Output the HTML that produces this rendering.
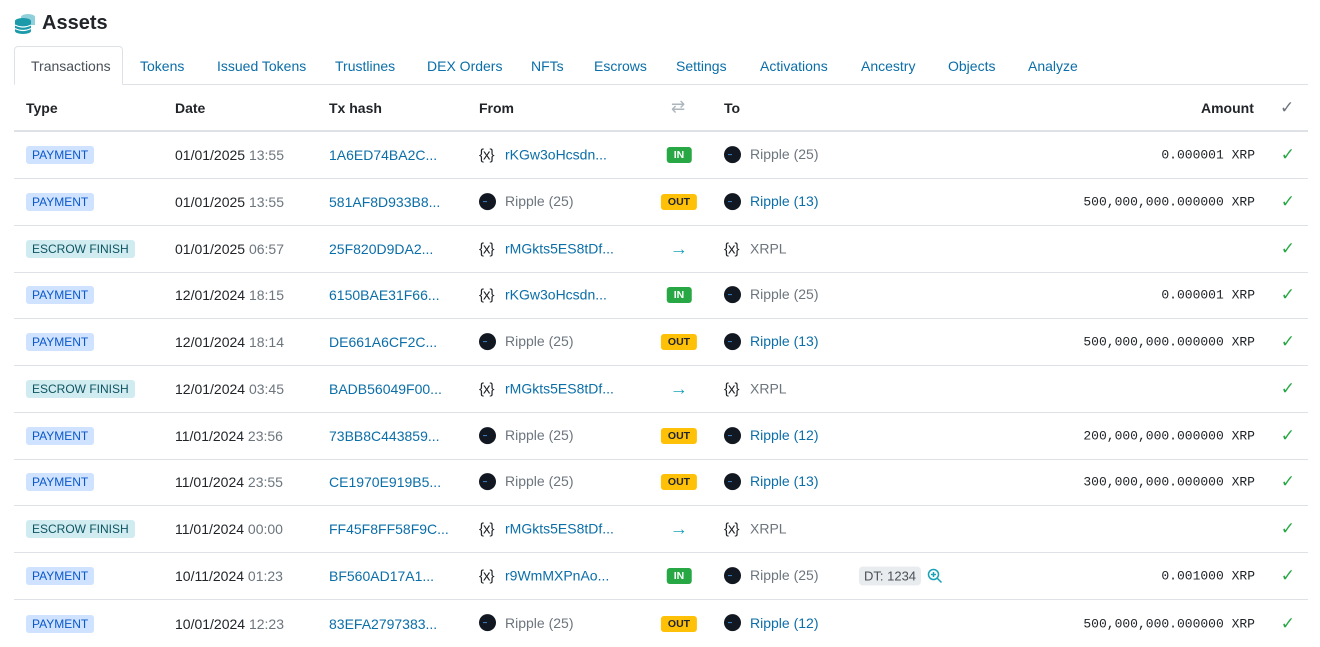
<!DOCTYPE html>
<html><head><meta charset="utf-8"><style>
*{box-sizing:border-box;margin:0;padding:0}
body{width:1320px;height:645px;background:#fff;font-family:"Liberation Sans",sans-serif;font-size:14px;color:#212529;position:relative;overflow:hidden}
.a{position:absolute;white-space:nowrap}
.title{left:42px;top:12px;font-size:20px;font-weight:bold;color:#212529}
.tabs{position:absolute;left:14px;top:84px;width:1294px;border-top:1px solid #dee2e6}
.tab{position:absolute;top:58px;color:#0a6ea8;font-size:14px}
.act{position:absolute;left:14px;top:46px;width:109px;height:39px;border:1px solid #dee2e6;border-bottom:1px solid #fff;border-radius:4px 4px 0 0;background:#fff}
.hd{font-weight:bold;top:100px}
.hline{position:absolute;left:14px;top:130px;width:1294px;height:2px;background:#dee2e6}
.row{position:absolute;left:14px;width:1294px;height:47px;border-bottom:1px solid #dee2e6}
.row .a{top:50%;transform:translateY(-50%)}
.badge{left:12px;background:#cfe2ff;color:#0a58ca;font-size:12px;padding:2px 6px;border-radius:3px}
.badge.e{background:#d1ecf1;color:#0c5460}
.dt{left:161px}.dt span{color:#6c757d}
.hash{left:315px;color:#0a6ea8}
.lnk{color:#0a6ea8}.gr{color:#6c757d}
.ic{display:inline-block;width:17px;height:17px;border-radius:50%;background:#121821;vertical-align:middle;margin-right:9px;position:relative;top:-1px}
.ic:after{content:"";position:absolute;left:4px;top:8px;width:4px;height:1px;background:#3b82c4}
.x{display:inline-block;width:17px;margin-right:9px;font-size:15px;color:#212529;letter-spacing:-1px}
.fr{left:465px}.to{left:710px}
.dir{left:665px;transform:translate(-50%,-50%)!important;font-size:10.5px;font-weight:bold;padding:2px 7px;border-radius:3px}
.in{background:#28a745;color:#fff}.out{background:#ffc107;color:#212529}
.arr{color:#17a2b8;font-size:18px;font-weight:bold;background:none}
.amt{right:53px;font-family:"Liberation Mono",monospace;font-size:13px}
.chk{right:13px;color:#28a745;font-size:17px}
</style></head><body>
<svg class="a" style="left:14px;top:12px" width="22" height="22" viewBox="0 0 22 22"><ellipse cx="14" cy="5" rx="7" ry="3" fill="#8fd0da"/><rect x="7" y="5" width="14" height="8" fill="#8fd0da"/><ellipse cx="9" cy="9" rx="8" ry="3" fill="#1b9aaa"/><rect x="1" y="9" width="16" height="10" fill="#1b9aaa"/><ellipse cx="9" cy="19" rx="8" ry="3" fill="#1b9aaa"/><path d="M1 13q8 4 16 0M1 16.5q8 4 16 0" stroke="#fff" stroke-width="1.2" fill="none"/></svg>
<div class="a title">Assets</div>
<div class="tabs"></div>
<div class="act"></div>
<div class="a" style="left:31px;top:58px;color:#495057">Transactions</div>
<div class="a tab" style="left:140px">Tokens</div>
<div class="a tab" style="left:217px">Issued Tokens</div>
<div class="a tab" style="left:335px">Trustlines</div>
<div class="a tab" style="left:427px">DEX Orders</div>
<div class="a tab" style="left:531px">NFTs</div>
<div class="a tab" style="left:594px">Escrows</div>
<div class="a tab" style="left:676px">Settings</div>
<div class="a tab" style="left:760px">Activations</div>
<div class="a tab" style="left:861px">Ancestry</div>
<div class="a tab" style="left:948px">Objects</div>
<div class="a tab" style="left:1028px">Analyze</div>
<div class="a hd" style="left:26px">Type</div>
<div class="a hd" style="left:175px">Date</div>
<div class="a hd" style="left:329px">Tx hash</div>
<div class="a hd" style="left:479px">From</div>
<div class="a" style="left:671px;top:97px;color:#adb5bd;font-size:17px">⇄</div>
<div class="a hd" style="left:724px">To</div>
<div class="a hd" style="left:1201px">Amount</div>
<div class="a" style="left:1280px;top:98px;color:#6c757d;font-size:17px">✓</div>
<div class="hline"></div>
<div class="row" style="top:132px"><div class="a badge">PAYMENT</div><div class="a dt">01/01/2025 <span>13:55</span></div><div class="a hash">1A6ED74BA2C...</div><div class="a fr"><span class="x">{x}</span><span class="lnk">rKGw3oHcsdn...</span></div><div class="a dir in">IN</div><div class="a to"><span class="ic"></span><span class="gr">Ripple (25)</span></div><div class="a amt">0.000001 XRP</div><div class="a chk">✓</div></div>
<div class="row" style="top:179px"><div class="a badge">PAYMENT</div><div class="a dt">01/01/2025 <span>13:55</span></div><div class="a hash">581AF8D933B8...</div><div class="a fr"><span class="ic"></span><span class="gr">Ripple (25)</span></div><div class="a dir out">OUT</div><div class="a to"><span class="ic"></span><span class="lnk">Ripple (13)</span></div><div class="a amt">500,000,000.000000 XRP</div><div class="a chk">✓</div></div>
<div class="row" style="top:226px"><div class="a badge e">ESCROW FINISH</div><div class="a dt">01/01/2025 <span>06:57</span></div><div class="a hash">25F820D9DA2...</div><div class="a fr"><span class="x">{x}</span><span class="lnk">rMGkts5ES8tDf...</span></div><div class="a dir arr">→</div><div class="a to"><span class="x">{x}</span><span class="gr">XRPL</span></div><div class="a chk">✓</div></div>
<div class="row" style="top:272px"><div class="a badge">PAYMENT</div><div class="a dt">12/01/2024 <span>18:15</span></div><div class="a hash">6150BAE31F66...</div><div class="a fr"><span class="x">{x}</span><span class="lnk">rKGw3oHcsdn...</span></div><div class="a dir in">IN</div><div class="a to"><span class="ic"></span><span class="gr">Ripple (25)</span></div><div class="a amt">0.000001 XRP</div><div class="a chk">✓</div></div>
<div class="row" style="top:319px"><div class="a badge">PAYMENT</div><div class="a dt">12/01/2024 <span>18:14</span></div><div class="a hash">DE661A6CF2C...</div><div class="a fr"><span class="ic"></span><span class="gr">Ripple (25)</span></div><div class="a dir out">OUT</div><div class="a to"><span class="ic"></span><span class="lnk">Ripple (13)</span></div><div class="a amt">500,000,000.000000 XRP</div><div class="a chk">✓</div></div>
<div class="row" style="top:366px"><div class="a badge e">ESCROW FINISH</div><div class="a dt">12/01/2024 <span>03:45</span></div><div class="a hash">BADB56049F00...</div><div class="a fr"><span class="x">{x}</span><span class="lnk">rMGkts5ES8tDf...</span></div><div class="a dir arr">→</div><div class="a to"><span class="x">{x}</span><span class="gr">XRPL</span></div><div class="a chk">✓</div></div>
<div class="row" style="top:413px"><div class="a badge">PAYMENT</div><div class="a dt">11/01/2024 <span>23:56</span></div><div class="a hash">73BB8C443859...</div><div class="a fr"><span class="ic"></span><span class="gr">Ripple (25)</span></div><div class="a dir out">OUT</div><div class="a to"><span class="ic"></span><span class="lnk">Ripple (12)</span></div><div class="a amt">200,000,000.000000 XRP</div><div class="a chk">✓</div></div>
<div class="row" style="top:459px"><div class="a badge">PAYMENT</div><div class="a dt">11/01/2024 <span>23:55</span></div><div class="a hash">CE1970E919B5...</div><div class="a fr"><span class="ic"></span><span class="gr">Ripple (25)</span></div><div class="a dir out">OUT</div><div class="a to"><span class="ic"></span><span class="lnk">Ripple (13)</span></div><div class="a amt">300,000,000.000000 XRP</div><div class="a chk">✓</div></div>
<div class="row" style="top:506px"><div class="a badge e">ESCROW FINISH</div><div class="a dt">11/01/2024 <span>00:00</span></div><div class="a hash">FF45F8FF58F9C...</div><div class="a fr"><span class="x">{x}</span><span class="lnk">rMGkts5ES8tDf...</span></div><div class="a dir arr">→</div><div class="a to"><span class="x">{x}</span><span class="gr">XRPL</span></div><div class="a chk">✓</div></div>
<div class="row" style="top:553px"><div class="a badge">PAYMENT</div><div class="a dt">10/11/2024 <span>01:23</span></div><div class="a hash">BF560AD17A1...</div><div class="a fr"><span class="x">{x}</span><span class="lnk">r9WmMXPnAo...</span></div><div class="a dir in">IN</div><div class="a to"><span class="ic"></span><span class="gr">Ripple (25)</span></div><div class="a" style="left:845px;background:#e9ecef;color:#495057;font-size:13px;padding:2px 5px;border-radius:4px">DT: 1234</div><svg class="a" style="left:913px" width="16" height="16" viewBox="0 0 16 16"><circle cx="6.5" cy="6.5" r="5" stroke="#17a2b8" stroke-width="1.5" fill="none"/><path d="M10 10l4.5 4.5M6.5 4v5M4 6.5h5" stroke="#17a2b8" stroke-width="1.5"/></svg><div class="a amt">0.001000 XRP</div><div class="a chk">✓</div></div>
<div class="row" style="top:600px;border-bottom:none"><div class="a badge">PAYMENT</div><div class="a dt">10/01/2024 <span>12:23</span></div><div class="a hash">83EFA2797383...</div><div class="a fr"><span class="ic"></span><span class="gr">Ripple (25)</span></div><div class="a dir out">OUT</div><div class="a to"><span class="ic"></span><span class="lnk">Ripple (12)</span></div><div class="a amt">500,000,000.000000 XRP</div><div class="a chk">✓</div></div>
</body></html>
